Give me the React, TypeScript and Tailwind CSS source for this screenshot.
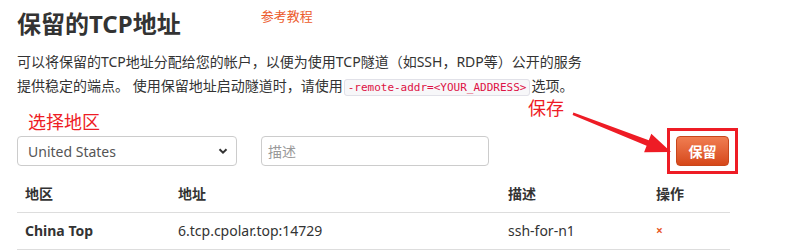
const font = {
  fontFamily: '"Noto Sans", "Noto Sans CJK SC", sans-serif',
};

const rows = [
  { region: "China Top", addr: "6.tcp.cpolar.top:14729", desc: "ssh-for-n1" },
];

export default function App() {
  return (
    <div
      className="relative h-[252px] w-[805px] overflow-hidden bg-white px-[17px] text-[14px] text-[#333]"
      style={font}
    >
      {/* title + tutorial link */}
      <div className="flex items-start pt-[9px]">
        <h2 className="text-[24px] font-bold leading-[29px] text-[#333]">保留的TCP地址</h2>
        <a className="ml-[80px] -mt-[2px] text-[13px] leading-[18px] text-[#ec5b2c]">参考教程</a>
      </div>

      <p className="mt-[12px] whitespace-nowrap leading-[24px]">
        可以将保留的TCP地址分配给您的帐户，以便为使用TCP隧道（如SSH，RDP等）公开的服务
        <br />
        提供稳定的端点。 使用保留地址启动隧道时，请使用
        <code
          className="mx-[1px] rounded-[3px] border border-[#e1e1e8] bg-[#f7f7f9] px-[3px] py-[1px] text-[11px] text-[#dd1144]"
          style={{ fontFamily: '"DejaVu Sans Mono", "Liberation Mono", monospace' }}
        >
          -remote-addr=&lt;YOUR_ADDRESS&gt;
        </code>
        选项。
      </p>

      <div className="ml-[11px] mt-[11px] text-[18px] leading-[22px] text-[#ee1c25]">选择地区</div>

      {/* form row */}
      <div className="mt-[3px] flex items-center">
        <div className="flex h-[30px] w-[220px] items-center justify-between rounded-[4px] border border-[#ccc] bg-white pl-[10px] pr-[8px] text-[#555]">
          <span>United States</span>
          <svg width="10" height="8" viewBox="0 0 10 8" fill="none">
            <path d="M1.5 2.2 L5 5.6 L8.5 2.2" stroke="#333" strokeWidth="2" />
          </svg>
        </div>
        <div className="ml-[24px] flex h-[30px] w-[228px] items-center rounded-[4px] border border-[#ccc] bg-white px-[6px] text-[#999]">
          描述
        </div>
        <div className="relative ml-[187px]">
          <span className="absolute -left-[9px] -top-[8px] -bottom-[8px] -right-[9px] border-[3px] border-[#ee1c25]" />
          <button className="relative h-[30px] w-[53px] rounded-[4px] border border-[#c8461b] bg-gradient-to-b from-[#f07d51] to-[#d64718] text-[14px] font-bold text-white">
            保留
          </button>
        </div>
      </div>

      {/* table */}
      <table className="mt-[9px] w-[713px] border-collapse text-left">
        <thead>
          <tr className="h-[37px] border-b border-[#ddd]">
            <th className="w-[153px] px-[8px] font-bold">地区</th>
            <th className="w-[330px] px-[8px] font-bold">地址</th>
            <th className="w-[148px] px-[8px] font-bold">描述</th>
            <th className="px-[8px] font-bold">操作</th>
          </tr>
        </thead>
        <tbody>
          {rows.map((r) => (
            <tr key={r.addr} className="h-[37px] border-b border-[#ddd]">
              <td className="px-[8px] font-bold">{r.region}</td>
              <td className="px-[8px]">{r.addr}</td>
              <td className="px-[8px]">{r.desc}</td>
              <td className="px-[8px] text-[12px] font-bold text-[#e8582a]">×</td>
            </tr>
          ))}
        </tbody>
      </table>

      {/* annotation: 保存 + arrow */}
      <div className="absolute left-[528px] top-[97px] text-[18px] leading-[22px] text-[#ee1c25]">保存</div>
      <svg className="pointer-events-none absolute left-0 top-0" width="805" height="252">
        <polygon
          points="573.4,112.6 648.8,140.2 651.3,133.7 671,152 644.1,152.3 646.6,145.8 572.6,115"
          fill="#ee1c25"
        />
      </svg>
    </div>
  );
}
